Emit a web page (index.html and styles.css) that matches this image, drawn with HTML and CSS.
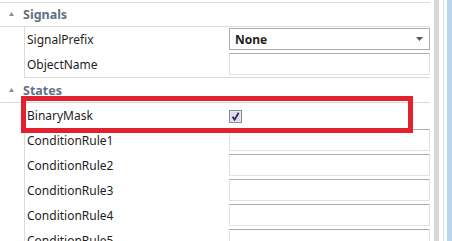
FILE: index.html
```html
<!DOCTYPE html>
<html lang="en">
<head>
  <meta charset="UTF-8">
  <title>Properties</title>
  <link rel="stylesheet" href="styles.css">
</head>
<body>
  <div class="window">
    <div class="grid">

      <!-- Signals -->
      <div class="category">
        <svg class="arrow" width="5" height="4" viewBox="0 0 5 4"><path d="M0 4 L2.5 0 L5 4 Z" fill="#8c8c8c"/></svg>
        <span>Signals</span>
      </div>
      <div class="rows">
        <div class="row">
          <div class="label">SignalPrefix</div>
          <div class="value">
            <div class="combo">
              <span>None</span>
              <svg width="7" height="4" viewBox="0 0 7 4"><path d="M0 0 L7 0 L3.5 4 Z" fill="#5a5a5a"/></svg>
            </div>
          </div>
        </div>
        <div class="row">
          <div class="label">ObjectName</div>
          <div class="value"><div class="textbox"></div></div>
        </div>
      </div>

      <!-- States -->
      <div class="category states">
        <svg class="arrow" width="5" height="4" viewBox="0 0 5 4"><path d="M0 4 L2.5 0 L5 4 Z" fill="#8c8c8c"/></svg>
        <span>States</span>
      </div>
      <div class="rows">
        <div class="row">
          <div class="label">BinaryMask</div>
          <div class="value">
            <svg class="check" width="13" height="13" viewBox="0 0 13 13">
              <rect x="0.5" y="0.5" width="12" height="12" fill="#e8e8ee" stroke="#8a8a8a"/>
              <rect x="2" y="2" width="9" height="9" fill="#dcdce6"/>
              <path d="M3.5 6.8 L5.6 9.6 L9.6 2.8" fill="none" stroke="#23246a" stroke-width="1.7"/>
            </svg>
          </div>
        </div>
        <div class="row">
          <div class="label">ConditionRule1</div>
          <div class="value"><div class="textbox"></div></div>
        </div>
        <div class="row">
          <div class="label">ConditionRule2</div>
          <div class="value"><div class="textbox"></div></div>
        </div>
        <div class="row">
          <div class="label">ConditionRule3</div>
          <div class="value"><div class="textbox"></div></div>
        </div>
        <div class="row">
          <div class="label">ConditionRule4</div>
          <div class="value"><div class="textbox"></div></div>
        </div>
        <div class="row">
          <div class="label">ConditionRule5</div>
          <div class="value"><div class="textbox"></div></div>
        </div>
      </div>

      <!-- marcação vermelha -->
      <div class="highlight"></div>
    </div>

    <div class="scroll"></div>
    <div class="gap"></div>
    <div class="edge"></div>
    <div class="side"></div>
  </div>
</body>
</html>
```

FILE: styles.css
```css
* {
  box-sizing: border-box;
  margin: 0;
  padding: 0;
}

body {
  font-family: "Noto Sans", "Open Sans", sans-serif;
  font-size: 12px;
  color: #1e1e1e;
  background: #fff;
  width: 452px;
  height: 241px;
  overflow: hidden;
}

.window {
  display: flex;
  height: 241px;
}

.grid {
  position: relative;
  width: 430px;
  padding-top: 2px;
  margin-right: 4px;
}

.category {
  display: flex;
  align-items: center;
  height: 25px;
  border-top: 1px solid #dadada;
  border-bottom: 1px solid #dadada;
  font-weight: bold;
  font-size: 12.5px;
  color: #5e7184;
}

.category .arrow {
  margin: 0 9px 1px 9px;
}

.category.states {
  height: 25px;
  border-top: none;
  margin-top: 0;
}

.rows {
  margin-left: 24px;
  border-left: 1px solid #dadada;
  border-bottom: 1px solid #dadada;
}

.row {
  display: flex;
  align-items: center;
  height: 25px;
}

.label {
  width: 204px;
  padding-left: 2px;
  white-space: nowrap;
}

.value {
  flex: 1;
  display: flex;
  align-items: center;
  height: 25px;
}

.textbox {
  width: 201px;
  height: 22px;
  margin-top: -1px;
  border: 1px solid #e3e3e3;
  border-top-color: #acacac;
  background: #fff;
}

.combo {
  display: flex;
  align-items: center;
  justify-content: space-between;
  width: 201px;
  height: 22px;
  margin-top: -1px;
  padding: 0 6px 0 5px;
  border: 1px solid #acacac;
  background: #fff;
  font-weight: bold;
}

.check {
  display: block;
  margin-top: 1px;
}

.highlight {
  position: absolute;
  left: 21px;
  top: 96px;
  width: 392px;
  height: 37px;
  border: 5px solid #e2202e;
}

.scroll {
  width: 5px;
  background: #d6d5d8;
}

.gap {
  width: 4px;
}

.edge {
  width: 1px;
  background: #dedede;
  margin-right: 3px;
}

.side {
  flex: 1;
  background: #bcd3ee;
}
```
